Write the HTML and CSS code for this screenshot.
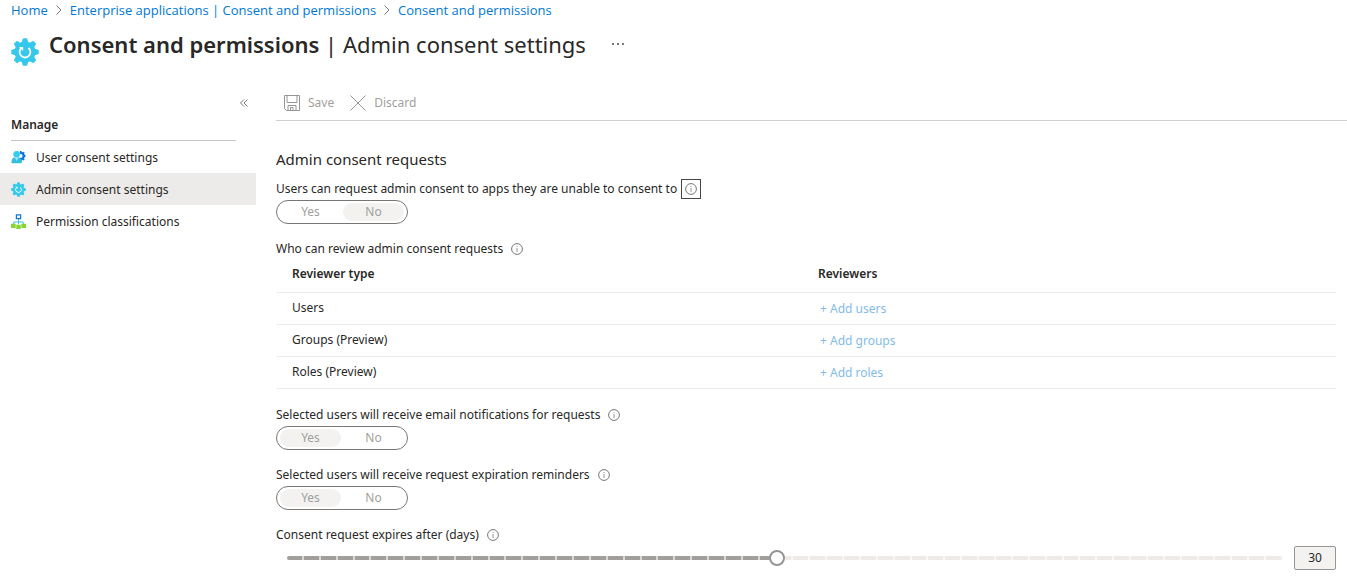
FILE: index.html
```html
<!DOCTYPE html>
<html lang="en">
<head>
    <meta charset="UTF-8">
    <meta name="viewport" content="width=device-width, initial-scale=1.0">
    <title>Consent and permissions | Admin consent settings</title>
    <link rel="stylesheet" href="styles.css">
</head>
<body>
    <!-- shared icons -->
    <svg class="sprite" aria-hidden="true">
        <symbol id="icon-gear" viewBox="0 0 28 28">
            <g fill="#35c8ec">
                <circle cx="14" cy="14" r="10.5"/>
                <path id="teeth" d="M10.500 5 11.800.8q.2-.5.700-.5h3q.5 0 .7.5L17.500 5zM10.500 23l1.300 4.200q.2.5.7.5h3q.5 0 .7-.5L17.500 23zM5 10.500.8 11.800q-.5.200-.5.700v3q0 .5.5.7L5 17.500zM23 10.500l4.200 1.300q.5.200.5.700v3q0 .5-.5.7L23 17.500z"/>
                <use href="#teeth" transform="rotate(45 14 14)"/>
            </g>
            <path d="M17.500 10a5.400 5.400 0 1 1-7.200.2" fill="none" stroke="#fff" stroke-width="1.800"/>
            <path d="M8 9h4.200v4z" fill="#fff"/>
        </symbol>
        <symbol id="icon-info" viewBox="0 0 12 12">
            <circle cx="6" cy="6" r="5.400" fill="none" stroke="#797775"/>
            <path d="M6 5v4M6 3v1" stroke="#979593"/>
        </symbol>
    </svg>

    <nav class="breadcrumb" aria-label="Breadcrumb">
        <a href="#">Home</a>
        <svg class="chevron" viewBox="0 0 6 10"><path d="M.5.5 5 5 .5 9.5"/></svg>
        <a href="#">Enterprise applications | Consent and permissions</a>
        <svg class="chevron" viewBox="0 0 6 10"><path d="M.5.5 5 5 .5 9.5"/></svg>
        <a href="#">Consent and permissions</a>
    </nav>

    <header class="blade-header">
        <svg class="blade-icon"><use href="#icon-gear"/></svg>
        <h1><strong>Consent and permissions</strong> | Admin consent settings</h1>
        <button class="more" type="button" aria-label="More">
            <svg viewBox="0 0 12 2"><path d="M0 0h2v2H0zM5 0h2v2H5zM10 0h2v2h-2z"/></svg>
        </button>
    </header>

    <div class="blade">
        <aside class="sidebar">
            <button class="collapse" type="button" aria-label="Collapse menu">
                <svg viewBox="0 0 8 8"><path d="M4 .5.5 4 4 7.5M7.5.5 4 4l3.5 3.5"/></svg>
            </button>
            <h2>Manage</h2>
            <ul class="menu">
                <li><a href="#">
                    <svg viewBox="0 0 16 16">
                        <path d="M15.5 6.800V5.200l-1.200-.3-.4-.9.7-1.100-1.100-1.100-1.100.7-.9-.4L11.200 1H9.500v11h1.700l.3-1.200.9-.4 1.100.7 1.100-1.100-.7-1.100.4-.9z" fill="#0f78d4"/>
                        <circle cx="10.300" cy="6.300" r="2" fill="#fff"/>
                        <circle cx="6" cy="4.500" r="3.500" fill="#32cdf0"/>
                        <path d="M.5 13c0-3 1.500-5 3.500-5h4c2 0 3.500 2 3.500 5 0 .6-.4 1-1 1h-9c-.6 0-1-.4-1-1z" fill="#32bedd"/>
                        <path d="M4.200 8 6 12l1.800-4z" fill="#9cebff"/>
                    </svg>
                    <span>User consent settings</span></a></li>
                <li><a href="#" class="selected" aria-current="page">
                    <svg><use href="#icon-gear"/></svg>
                    <span>Admin consent settings</span></a></li>
                <li><a href="#">
                    <svg viewBox="0 0 16 16">
                        <path d="M8 5v6M3 11V8.500h10V11" fill="none" stroke="#32bedd"/>
                        <path d="M5.800 1h4.400v4H5.800z" fill="#fff" stroke="#0f78d4" stroke-width="1.400"/>
                        <path d="M0 10.500h5V15H0zM5.600 11.500h4.800V16H5.600zM11 10.500h5V15h-5z" fill="#86d633"/>
                    </svg>
                    <span>Permission classifications</span></a></li>
            </ul>
        </aside>

        <main class="content">
            <div class="toolbar">
                <button type="button" disabled>
                    <svg viewBox="0 0 16 16"><path d="M.5.5h15v15h-13l-2-2zM3 .5v7h10v-7M4 15.500V10.500h8v5M6.500 15.500v-3H9v3"/></svg>
                    Save
                </button>
                <button type="button" disabled>
                    <svg viewBox="0 0 16 16"><path d="m.5.5 15 15M15.500.5l-15 15"/></svg>
                    Discard
                </button>
            </div>

            <form class="settings">
                <h3>Admin consent requests</h3>

                <fieldset>
                    <legend>Users can request admin consent to apps they are unable to consent to
                        <button class="info focused" type="button" aria-label="Info"><svg><use href="#icon-info"/></svg></button>
                    </legend>
                    <div class="toggle">
                        <label><input type="radio" name="requests" disabled>Yes</label>
                        <label><input type="radio" name="requests" checked disabled>No</label>
                    </div>
                </fieldset>

                <div class="field-label" id="reviewers-label">Who can review admin consent requests
                    <button class="info" type="button" aria-label="Info"><svg><use href="#icon-info"/></svg></button>
                </div>
                <table aria-labelledby="reviewers-label">
                    <thead>
                        <tr><th>Reviewer type</th><th>Reviewers</th></tr>
                    </thead>
                    <tbody>
                        <tr><td>Users</td><td><a href="#">+ Add users</a></td></tr>
                        <tr><td>Groups (Preview)</td><td><a href="#">+ Add groups</a></td></tr>
                        <tr><td>Roles (Preview)</td><td><a href="#">+ Add roles</a></td></tr>
                    </tbody>
                </table>

                <fieldset>
                    <legend>Selected users will receive email notifications for requests
                        <button class="info" type="button" aria-label="Info"><svg><use href="#icon-info"/></svg></button>
                    </legend>
                    <div class="toggle">
                        <label><input type="radio" name="email" checked disabled>Yes</label>
                        <label><input type="radio" name="email" disabled>No</label>
                    </div>
                </fieldset>

                <fieldset>
                    <legend>Selected users will receive request expiration reminders
                        <button class="info" type="button" aria-label="Info"><svg><use href="#icon-info"/></svg></button>
                    </legend>
                    <div class="toggle">
                        <label><input type="radio" name="reminders" checked disabled>Yes</label>
                        <label><input type="radio" name="reminders" disabled>No</label>
                    </div>
                </fieldset>

                <div class="field-label">
                    <label for="days">Consent request expires after (days)</label>
                    <button class="info" type="button" aria-label="Info"><svg><use href="#icon-info"/></svg></button>
                </div>
                <div class="slider">
                    <input type="range" id="days" min="1" max="60" value="30" style="--fill: 49.15%" disabled>
                    <input type="text" class="days-value" value="30" aria-label="Days" readonly>
                </div>
            </form>
        </main>
    </div>
</body>
</html>
```
FILE: styles.css
```css
* {
    box-sizing: border-box;
}
body {
    margin: 0;
    font-family: "Segoe UI", "Noto Sans", "Open Sans", sans-serif;
    font-size: 12px;
    line-height: 20px;
    color: #292827;
    background: #fff;
}
a {
    color: #0078d4;
    text-decoration: none;
}
a:hover {
    text-decoration: underline;
}
button {
    font: inherit;
    color: inherit;
    background: none;
    border: none;
    padding: 0;
}
h1, h2, h3, ul, fieldset, legend {
    margin: 0;
    padding: 0;
    border: none;
}
svg {
    display: block;
    flex: none;
}
.sprite {
    position: absolute;
    width: 0;
    height: 0;
}

/* header */
.breadcrumb {
    display: flex;
    align-items: center;
    gap: 8px;
    padding-left: 11px;
    font-family: "Segoe UI", "Open Sans", sans-serif;
    font-size: 13px;
}
.chevron {
    width: 6px;
    height: 10px;
    fill: none;
    stroke: #797775;
}
.blade-header {
    display: flex;
    align-items: center;
    height: 66px;
    padding: 0 11px 18px;
}
.blade-icon {
    width: 28px;
    height: 28px;
    margin-top: 16px;
}
.blade-header h1 {
    margin-left: 10px;
    font-size: 22px;
    font-weight: 400;
    line-height: 32px;
}
.blade-header strong {
    font-weight: 600;
}
.more {
    margin-left: 26px;
}
.more svg {
    width: 12px;
    height: 2px;
    fill: #797775;
}

.blade {
    display: flex;
}

/* left menu */
.sidebar {
    width: 256px;
    flex: none;
}
.collapse {
    display: block;
    margin: 13px 8px 8px auto;
}
.collapse svg {
    width: 8px;
    height: 8px;
    fill: none;
    stroke: #797775;
}
.sidebar h2 {
    margin: 0 20px 0 11px;
    padding-bottom: 5px;
    border-bottom: 1px solid #c8c6c4;
    font-size: 12px;
    font-weight: 600;
}
.menu {
    list-style: none;
}
.menu a {
    display: flex;
    align-items: center;
    gap: 10px;
    height: 32px;
    padding-left: 11px;
    color: inherit;
}
.menu a.selected {
    background: #edebe9;
}
.menu svg {
    width: 15px;
    height: 15px;
}
.menu span {
    padding-top: 2px;
}

/* right side */
.content {
    flex: 1;
    padding-left: 20px;
}
.toolbar {
    display: flex;
    gap: 16px;
    height: 35px;
    padding-left: 8px;
    border-bottom: 1px solid #d2d0ce;
}
.toolbar button {
    display: flex;
    align-items: center;
    gap: 8px;
    color: #a19f9d;
}
.toolbar svg {
    width: 16px;
    height: 16px;
    fill: none;
    stroke: #979593;
}
.settings {
    padding: 28px 11px 12px 0;
}
.settings h3 {
    margin-bottom: 10px;
    font-size: 15px;
    font-weight: 400;
}
.settings legend,
.field-label {
    display: flex;
    align-items: center;
    gap: 4px;
    height: 20px;
}
.settings fieldset {
    margin-bottom: 15px;
}
.info {
    padding: 3px;
    border: 1px solid transparent;
}
.info svg {
    width: 12px;
    height: 12px;
}
.info.focused {
    border-color: #484644;
}
.toggle {
    display: flex;
    width: 132px;
    height: 24px;
    margin-top: 1px;
    padding: 2px;
    border: 1px solid #797775;
    border-radius: 12px;
}
.toggle label {
    flex: 1;
    margin: 0 1px;
    border-radius: 9px;
    line-height: 18px;
    text-align: center;
    color: #a19f9d;
}
.toggle label:has(:checked) {
    background: #f3f2f1;
}
.toggle input {
    position: absolute;
    opacity: 0;
    margin: 0;
}

table {
    width: 100%;
    margin-bottom: 16px;
    border-collapse: collapse;
    table-layout: fixed;
}
th, td {
    height: 32px;
    padding: 0 0 0 16px;
    border-bottom: 1px solid #edebe9;
    text-align: left;
}
th {
    height: 33px;
    padding-bottom: 2px;
    font-weight: 600;
}
th + th,
td + td {
    padding-left: 12px;
}
td + td {
    padding-top: 2px;
}
td a {
    padding-left: 2px;
    color: #83bbec;
}

.slider {
    display: flex;
    align-items: center;
    gap: 11px;
    margin-top: 1px;
    padding-left: 11px;
}
.slider input[type="range"] {
    flex: 1;
    min-width: 0;
    height: 16px;
    margin: 0;
    appearance: none;
    background: none;
}
.slider input::-webkit-slider-runnable-track {
    height: 4px;
    border-radius: 2px;
    background:
        repeating-linear-gradient(to right, transparent 0 calc(100% / 59 - 2px), rgba(255, 255, 255, .6) calc(100% / 59 - 2px) calc(100% / 59)),
        linear-gradient(to right, #a19f9d var(--fill), #edebe9 var(--fill));
}
.slider input::-webkit-slider-thumb {
    appearance: none;
    width: 16px;
    height: 16px;
    margin-top: -6px;
    border: 2px solid #979593;
    border-radius: 50%;
    background: #fff;
}
.days-value {
    width: 42px;
    height: 24px;
    padding: 0;
    border: 1px solid #979593;
    border-radius: 2px;
    background: #f3f2f1;
    font: inherit;
    color: inherit;
    text-align: center;
}
```
